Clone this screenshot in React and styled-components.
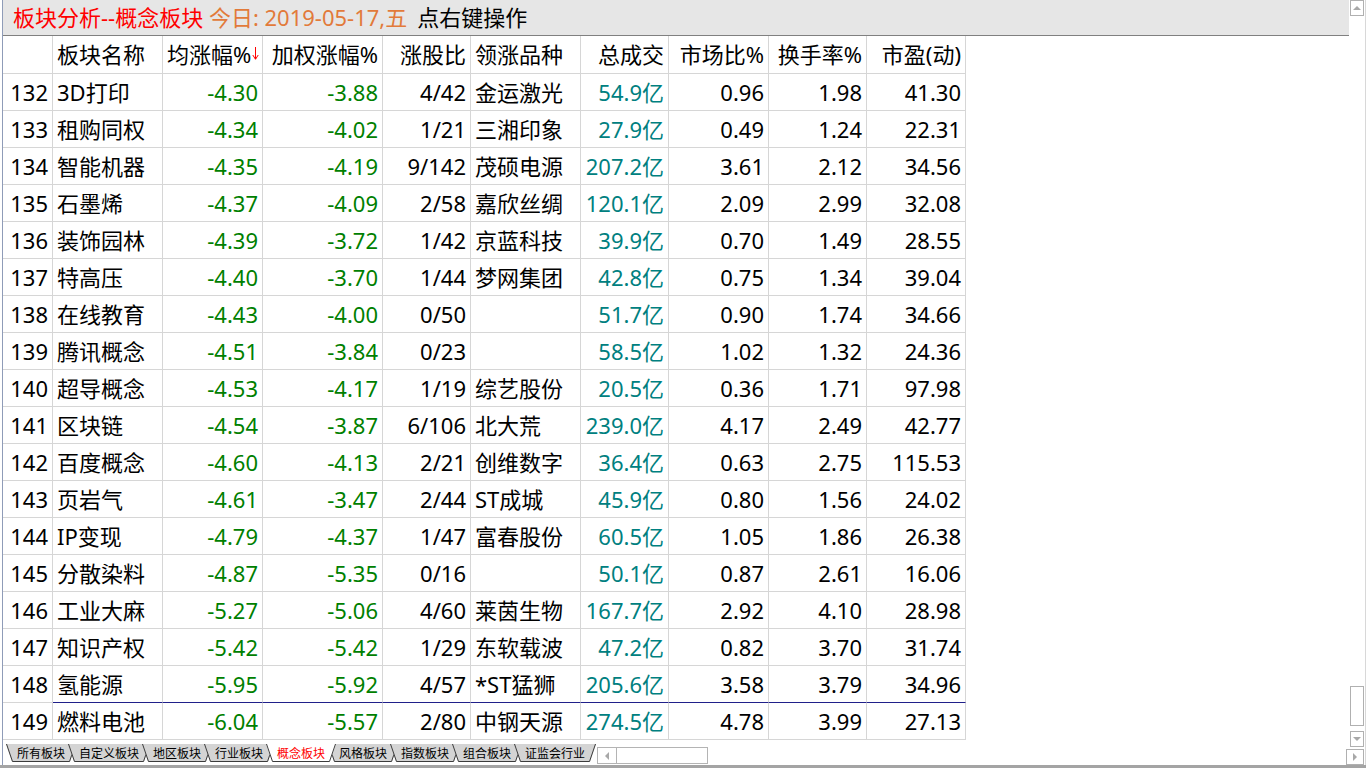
import React from 'react'
import styled, { createGlobalStyle } from 'styled-components'

const GlobalStyle = createGlobalStyle`
  html, body {
    margin: 0;
    padding: 0;
    background: #fff;
  }
  body {
    font-family: "Noto Sans", "Noto Sans CJK SC", sans-serif;
    overflow: hidden;
  }
`

const COLS = '50px 110px 100px 120px 88px 110px 88px 100px 98px 99px'
const LINE = '#d6d6d6'

const rows = [
  ['132', '3D打印', '-4.30', '-3.88', '4/42', '金运激光', '54.9亿', '0.96', '1.98', '41.30'],
  ['133', '租购同权', '-4.34', '-4.02', '1/21', '三湘印象', '27.9亿', '0.49', '1.24', '22.31'],
  ['134', '智能机器', '-4.35', '-4.19', '9/142', '茂硕电源', '207.2亿', '3.61', '2.12', '34.56'],
  ['135', '石墨烯', '-4.37', '-4.09', '2/58', '嘉欣丝绸', '120.1亿', '2.09', '2.99', '32.08'],
  ['136', '装饰园林', '-4.39', '-3.72', '1/42', '京蓝科技', '39.9亿', '0.70', '1.49', '28.55'],
  ['137', '特高压', '-4.40', '-3.70', '1/44', '梦网集团', '42.8亿', '0.75', '1.34', '39.04'],
  ['138', '在线教育', '-4.43', '-4.00', '0/50', '', '51.7亿', '0.90', '1.74', '34.66'],
  ['139', '腾讯概念', '-4.51', '-3.84', '0/23', '', '58.5亿', '1.02', '1.32', '24.36'],
  ['140', '超导概念', '-4.53', '-4.17', '1/19', '综艺股份', '20.5亿', '0.36', '1.71', '97.98'],
  ['141', '区块链', '-4.54', '-3.87', '6/106', '北大荒', '239.0亿', '4.17', '2.49', '42.77'],
  ['142', '百度概念', '-4.60', '-4.13', '2/21', '创维数字', '36.4亿', '0.63', '2.75', '115.53'],
  ['143', '页岩气', '-4.61', '-3.47', '2/44', 'ST成城', '45.9亿', '0.80', '1.56', '24.02'],
  ['144', 'IP变现', '-4.79', '-4.37', '1/47', '富春股份', '60.5亿', '1.05', '1.86', '26.38'],
  ['145', '分散染料', '-4.87', '-5.35', '0/16', '', '50.1亿', '0.87', '2.61', '16.06'],
  ['146', '工业大麻', '-5.27', '-5.06', '4/60', '莱茵生物', '167.7亿', '2.92', '4.10', '28.98'],
  ['147', '知识产权', '-5.42', '-5.42', '1/29', '东软载波', '47.2亿', '0.82', '3.70', '31.74'],
  ['148', '氢能源', '-5.95', '-5.92', '4/57', '*ST猛狮', '205.6亿', '3.58', '3.79', '34.96'],
  ['149', '燃料电池', '-6.04', '-5.57', '2/80', '中钢天源', '274.5亿', '4.78', '3.99', '27.13'],
]

// alignment and colour of each column
const colAlign = ['right', 'left', 'right', 'right', 'right', 'left', 'right', 'right', 'right', 'right']
const colTone = ['', '', 'down', 'down', '', '', 'amount', '', '', '']

const headers = ['', '板块名称', '均涨幅%', '加权涨幅%', '涨股比', '领涨品种', '总成交', '市场比%', '换手率%', '市盈(动)']

const tabs = ['所有板块', '自定义板块', '地区板块', '行业板块', '概念板块', '风格板块', '指数板块', '组合板块', '证监会行业']
const ACTIVE_TAB = 4

const toneColor = {
  down: '#008000',
  amount: '#008080',
}

const Page = styled.div`
  width: 1366px;
  height: 768px;
  display: flex;
  flex-direction: column;
  background: #fff;
`

const Body = styled.div`
  flex: 1;
  display: flex;
  min-height: 0;
  padding-left: 2px;
`

const Main = styled.div`
  flex: 1;
  min-width: 0;
  display: flex;
  flex-direction: column;
  border-left: 1px solid #8f9cb8;
`

const TitleBar = styled.div`
  height: 35px;
  flex-shrink: 0;
  display: flex;
  align-items: center;
  padding-left: 10px;
  background: #e6e6e6;
  border-bottom: 1px solid #808080;
  font-size: 22px;
  line-height: 35px;
  white-space: pre;
`

const TitlePart = styled.span`
  color: ${({ $color }) => $color};
  margin-left: ${({ $gap }) => $gap || 0}px;
`

const Table = styled.div`
  width: 963px;
  display: flex;
  flex-direction: column;
  flex-shrink: 0;
`

const Row = styled.div`
  display: grid;
  grid-template-columns: ${COLS};
  height: ${({ $head }) => ($head ? 38 : 37)}px;
`

const Cell = styled.div`
  box-sizing: border-box;
  padding: 0 4px;
  border-right: 1px solid ${LINE};
  border-bottom: 1px solid ${({ $mark }) => ($mark ? '#20208a' : LINE)};
  font-size: 22px;
  line-height: ${({ $head }) => ($head ? 37 : 36)}px;
  text-align: ${({ $align }) => $align};
  color: ${({ $tone }) => toneColor[$tone] || '#000'};
  white-space: nowrap;
  overflow: hidden;
`

const SortArrow = styled.svg`
  margin-left: 1px;
  vertical-align: 3px;
`

const TabBar = styled.div`
  flex: 1;
  display: flex;
  align-items: flex-start;
  padding: 4px 0 0 3px;
`

const Tab = styled.div`
  position: relative;
  flex-shrink: 0;
  width: ${({ $w }) => $w}px;
  height: 18px;
  margin-left: -8px;
  z-index: ${({ $active }) => ($active ? 2 : 'auto')};
  font-family: "Noto Sans CJK SC", sans-serif;
  font-size: 12px;
  line-height: 18px;
  text-align: center;
  color: ${({ $active }) => ($active ? '#ff0000' : '#000')};

  &:first-child {
    margin-left: 0;
  }
`

const TabShape = styled.svg`
  position: absolute;
  left: 0;
  top: 0;
`

const TabLabel = styled.span`
  position: relative;
`

const HScroll = styled.div`
  margin: 3px 0 0 1px;
  width: 109px;
  height: 15px;
  border: 1px solid #b4b4b4;
  display: flex;
`

const ArrowBox = styled.div`
  box-sizing: border-box;
  width: ${({ $w }) => $w || 14}px;
  height: ${({ $h }) => $h || 16}px;
  border: 1px solid #b0b0b0;
  background: #fff;
  display: flex;
  align-items: center;
  justify-content: center;
  flex-shrink: 0;
`

const HArrowBox = styled.div`
  width: 18px;
  border-right: 1px solid #b4b4b4;
  display: flex;
  align-items: center;
  justify-content: center;
`

const Tri = styled.span`
  width: 0;
  height: 0;
  ${({ $dir }) => {
    const c = '#a8a8a8'
    if ($dir === 'up') return `border-left: 4px solid transparent; border-right: 4px solid transparent; border-bottom: 4px solid ${c};`
    if ($dir === 'down') return `border-left: 4px solid transparent; border-right: 4px solid transparent; border-top: 4px solid ${c};`
    if ($dir === 'left') return `border-top: 4px solid transparent; border-bottom: 4px solid transparent; border-right: 4px solid ${c};`
    return `border-top: 4px solid transparent; border-bottom: 4px solid transparent; border-left: 4px solid ${c};`
  }}
`

const ScrollCol = styled.div`
  width: 17px;
  box-sizing: border-box;
  padding-left: 1px;
  border-right: 1px solid #d8d8d8;
  display: flex;
  flex-direction: column;
  align-items: flex-start;
`

const Thumb = styled.div`
  box-sizing: border-box;
  width: 14px;
  height: 40px;
  border: 1px solid #b0b0b0;
  margin-top: auto;
  margin-bottom: 5px;
`

const BottomBar = styled.div`
  height: 3px;
  background: #a4a4a4;
  flex-shrink: 0;
`

function Arrow() {
  return (
    <SortArrow width="7" height="13" viewBox="0 0 7 13">
      <line x1="3.5" y1="0" x2="3.5" y2="12" stroke="#ff0000" strokeWidth="1" />
      <polyline points="0.8,8 3.5,12.3 6.2,8" fill="none" stroke="#ff0000" strokeWidth="1" />
    </SortArrow>
  )
}

function SheetTab({ label, active }) {
  const w = label.length * 12 + 22
  return (
    <Tab $w={w} $active={active}>
      <TabShape width={w} height="18" viewBox={`0 0 ${w} 18`}>
        <polygon points={`0,0 ${w},0 ${w - 6},18 6,18`} fill={active ? '#ffffff' : '#d4d4d4'} />
        <polyline
          points={`0.5,0 6.5,17.5 ${w - 6.5},17.5 ${w - 0.5},0`}
          fill="none"
          stroke="#3c3c3c"
          strokeWidth="1"
        />
      </TabShape>
      <TabLabel>{label}</TabLabel>
    </Tab>
  )
}

export default function App() {
  return (
    <Page>
      <GlobalStyle />
      <Body>
        <Main>
          <TitleBar>
            <TitlePart $color="#ff0000">板块分析--概念板块</TitlePart>
            <TitlePart $color="#e27a3a"> 今日: 2019-05-17,五</TitlePart>
            <TitlePart $color="#000" $gap={10}>点右键操作</TitlePart>
          </TitleBar>

          <Table>
            <Row $head>
              {headers.map((h, i) => (
                <Cell key={i} $head $align={i === 1 || i === 5 ? 'left' : 'right'}>
                  {h}
                  {i === 2 && <Arrow />}
                </Cell>
              ))}
            </Row>
            {rows.map((r, ri) => (
              <Row key={r[0]}>
                {r.map((v, ci) => (
                  <Cell
                    key={ci}
                    $align={colAlign[ci]}
                    $tone={colTone[ci]}
                    $mark={ri === rows.length - 2 && ci > 0}
                  >
                    {v}
                  </Cell>
                ))}
              </Row>
            ))}
          </Table>

          <TabBar>
            {tabs.map((t, i) => (
              <SheetTab key={t} label={t} active={i === ACTIVE_TAB} />
            ))}
            <HScroll>
              <HArrowBox>
                <Tri $dir="left" />
              </HArrowBox>
            </HScroll>
          </TabBar>
        </Main>

        <ScrollCol>
          <ArrowBox>
            <Tri $dir="up" />
          </ArrowBox>
          <Thumb />
          <ArrowBox style={{ marginBottom: 2 }}>
            <Tri $dir="down" />
          </ArrowBox>
          <ArrowBox $w={18} style={{ marginLeft: -4 }}>
            <Tri $dir="right" />
          </ArrowBox>
        </ScrollCol>
      </Body>
      <BottomBar />
    </Page>
  )
}
